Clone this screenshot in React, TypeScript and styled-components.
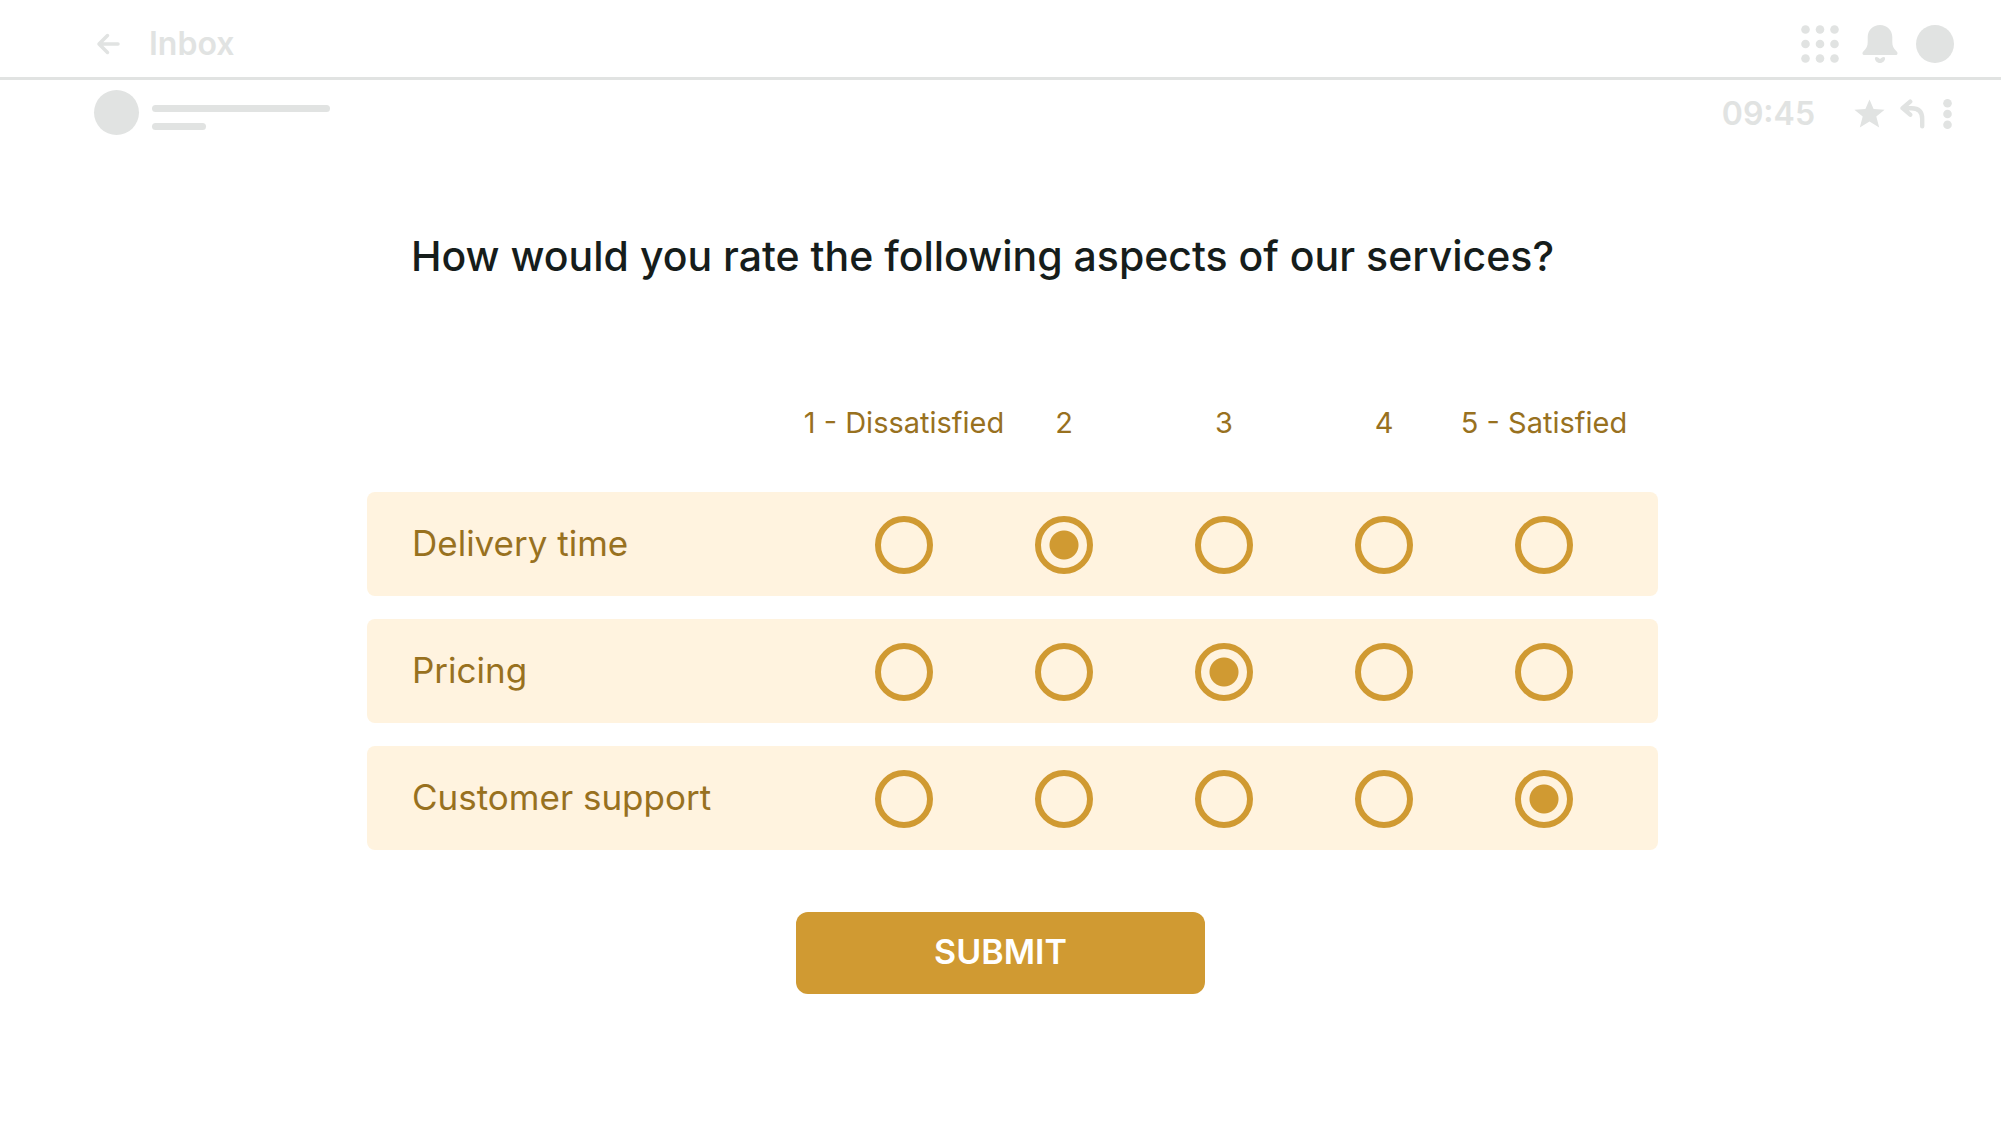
import React, { useState } from "react";
import styled, { createGlobalStyle } from "styled-components";

const color = {
  page: "#ffffff",
  muted: "#e1e3e2",
  ink: "#161d1b",
  brown: "#98711f",
  gold: "#d09a32",
  cream: "#fff3df",
};

const GlobalStyle = createGlobalStyle`
  *, *::before, *::after { box-sizing: border-box; }
  body {
    margin: 0;
    background: ${color.page};
    color: ${color.ink};
    font-family: Inter, "Liberation Sans", sans-serif;
  }
`;

const TopBar = styled.header`
  display: flex;
  align-items: center;
  justify-content: space-between;
  height: 80px;
  padding: 10px 47px 0 95px;
  border-bottom: 3px solid ${color.muted};
  color: ${color.muted};
`;

const MessageBar = styled.section`
  display: flex;
  align-items: flex-start;
  justify-content: space-between;
  padding: 10px 49px 0 94px;
  color: ${color.muted};
`;

const Cluster = styled.div<{ $gap: number }>`
  display: flex;
  align-items: center;
  gap: ${(p) => p.$gap}px;
`;

const MessageActions = styled(Cluster)`
  padding-top: 4px;
`;

const IconButton = styled.button`
  display: flex;
  padding: 0;
  border: 0;
  background: none;
  color: inherit;
  cursor: pointer;
`;

const BarText = styled.span`
  font-size: 32px;
  line-height: 40px;
  font-weight: 600;
`;

const Disc = styled.span<{ $size: number }>`
  width: ${(p) => p.$size}px;
  height: ${(p) => p.$size}px;
  border-radius: 50%;
  background: ${color.muted};
`;

const SenderLines = styled.div`
  display: grid;
  gap: 11px;
  padding-top: 10px;
`;

const Line = styled.span<{ $width: number }>`
  width: ${(p) => p.$width}px;
  height: 7px;
  border-radius: 4px;
  background: ${color.muted};
`;

const Form = styled.form`
  display: grid;
  grid-template-columns: 367fr minmax(1100px, 1291fr) 343fr;
  padding: 97px 0;
`;

const Title = styled.h1`
  grid-column: 2;
  margin: 0;
  padding-left: 44px;
  font-size: 41px;
  line-height: 48px;
  font-weight: 500;
  white-space: nowrap;
`;

const RatingTable = styled.table`
  grid-column: 2;
  width: 100%;
  margin-top: 103px;
  table-layout: fixed;
  border-spacing: 0 23px;
  color: ${color.brown};
`;

const LabelCol = styled.col``;

const ScoreCol = styled.col`
  width: 160px;
`;

const EndCol = styled.col`
  width: 34px;
`;

const ScoreHead = styled.th`
  height: 63px;
  padding: 0;
  vertical-align: top;
  font-weight: 400;
`;

const ScoreName = styled.span`
  display: flex;
  justify-content: center;
  font-size: 29px;
  line-height: 34px;
  white-space: nowrap;
`;

const RowName = styled.th`
  height: 104px;
  padding: 0 0 2px 45px;
  border-radius: 8px 0 0 8px;
  background: ${color.cream};
  font-size: 35px;
  line-height: 42px;
  font-weight: 400;
  text-align: left;
`;

const Cell = styled.td`
  padding: 2px 0 0;
  background: ${color.cream};
  text-align: center;
`;

const EndCell = styled.td`
  padding: 0;
  border-radius: 0 8px 8px 0;
  background: ${color.cream};
`;

const Radio = styled.input`
  appearance: none;
  display: block;
  width: 58px;
  height: 58px;
  margin: 0 auto;
  border: 6px solid ${color.gold};
  border-radius: 50%;
  cursor: pointer;

  &:checked {
    background: radial-gradient(circle, ${color.gold} 14px, transparent 15px);
  }
`;

const Submit = styled.button`
  grid-column: 1 / -1;
  justify-self: center;
  width: 409px;
  height: 82px;
  margin-top: 39px;
  padding: 0 0 2px;
  border: 0;
  border-radius: 12px;
  background: ${color.gold};
  color: #fff;
  font: 600 34px/40px Inter, "Liberation Sans", sans-serif;
  cursor: pointer;
`;

const BackIcon = () => (
  <svg width="26" height="24" viewBox="0 0 26 24" fill="none" stroke="currentColor" strokeWidth="3.5" strokeLinecap="round" strokeLinejoin="round">
    <path d="M23 12H4M12.500 3.500L4 12l8.500 8.500" />
  </svg>
);

const AppsIcon = () => (
  <svg width="38" height="38" viewBox="0 0 38 38" fill="currentColor">
    {[4.5, 19, 33.5].map((y) => [4.5, 19, 33.5].map((x) => <circle key={`${x}-${y}`} cx={x} cy={y} r="4.300" />))}
  </svg>
);

const BellIcon = () => (
  <svg width="36" height="38" viewBox="0 0 36 38" fill="currentColor">
    <path d="M18 0C11 0 5.700 5 5.700 12v5c0 4-1.200 6.500-3.900 9C.6 27.200.3 28 .6 29c.2.700.8 1 1.700 1h31.400c.9 0 1.500-.3 1.700-1 .3-1 0-1.800-1.200-3-2.700-2.500-3.900-5-3.900-9v-5C30.300 5 25 0 18 0Z" />
    <path d="M13 32.500c.8-.8 2.200-.8 3 0l2 1.500 2-1.500c.8-.8 2.200-.8 3 0 .5 3-2 5.500-5 5.500s-5.500-2.500-5-5.500Z" />
  </svg>
);

const StarIcon = () => (
  <svg width="31" height="30" viewBox="0 0 31 30" fill="currentColor">
    <path d="M15.500 0.500l4.100 9.600 11 .7-8.300 6.700 2.900 10.900-9.700-5.900-9.700 5.900 2.900-10.900L.4 10.800l11-.7z" />
  </svg>
);

const ReplyIcon = () => (
  <svg width="25" height="30" viewBox="0 0 25 30" fill="none" stroke="currentColor" strokeWidth="4.400" strokeLinecap="round" strokeLinejoin="round">
    <path d="M10.200 2.700L2.600 9.200l7.600 6.500M3.500 9.200h8c7 0 10.700 3.500 10.700 10.500V27.300" />
  </svg>
);

const MoreIcon = () => (
  <svg width="9" height="30" viewBox="0 0 9 30" fill="currentColor">
    {[4.3, 15, 25.7].map((y) => <circle key={y} cx="4.500" cy={y} r="4.300" />)}
  </svg>
);

const scores = ["1 - Dissatisfied", "2", "3", "4", "5 - Satisfied"];
const aspects = ["Delivery time", "Pricing", "Customer support"];

export default function App() {
  const [ratings, setRatings] = useState<number[]>([1, 2, 4]);
  const rate = (row: number, score: number) =>
    setRatings((prev) => prev.map((value, i) => (i === row ? score : value)));

  return (
    <>
      <GlobalStyle />
      <TopBar>
        <Cluster $gap={28}>
          <IconButton type="button" aria-label="Back"><BackIcon /></IconButton>
          <BarText>Inbox</BarText>
        </Cluster>
        <Cluster $gap={23}>
          <IconButton type="button" aria-label="Apps"><AppsIcon /></IconButton>
          <Cluster $gap={18}>
            <IconButton type="button" aria-label="Notifications"><BellIcon /></IconButton>
            <IconButton type="button" aria-label="Account"><Disc $size={38} /></IconButton>
          </Cluster>
        </Cluster>
      </TopBar>
      <MessageBar>
        <Cluster $gap={13}>
          <Disc $size={45} />
          <SenderLines>
            <Line $width={178} />
            <Line $width={54} />
          </SenderLines>
        </Cluster>
        <MessageActions $gap={39}>
          <BarText as="time">09:45</BarText>
          <Cluster $gap={18}>
            <Cluster $gap={15}>
              <IconButton type="button" aria-label="Star"><StarIcon /></IconButton>
              <IconButton type="button" aria-label="Reply"><ReplyIcon /></IconButton>
            </Cluster>
            <IconButton type="button" aria-label="More"><MoreIcon /></IconButton>
          </Cluster>
        </MessageActions>
      </MessageBar>
      <Form onSubmit={(e) => e.preventDefault()}>
        <Title>How would you rate the following aspects of our services?</Title>
        <RatingTable>
          <colgroup>
            <LabelCol />
            {scores.map((s) => <ScoreCol key={s} />)}
            <EndCol />
          </colgroup>
          <thead>
            <tr>
              <td />
              {scores.map((s) => (
                <ScoreHead key={s} scope="col"><ScoreName>{s}</ScoreName></ScoreHead>
              ))}
              <td />
            </tr>
          </thead>
          <tbody>
            {aspects.map((aspect, row) => (
              <tr key={aspect}>
                <RowName scope="row">{aspect}</RowName>
                {scores.map((s, i) => (
                  <Cell key={s}>
                    <Radio
                      type="radio"
                      name={aspect}
                      aria-label={`${aspect}: ${s}`}
                      checked={ratings[row] === i}
                      onChange={() => rate(row, i)}
                    />
                  </Cell>
                ))}
                <EndCell />
              </tr>
            ))}
          </tbody>
        </RatingTable>
        <Submit type="submit">SUBMIT</Submit>
      </Form>
    </>
  );
}
